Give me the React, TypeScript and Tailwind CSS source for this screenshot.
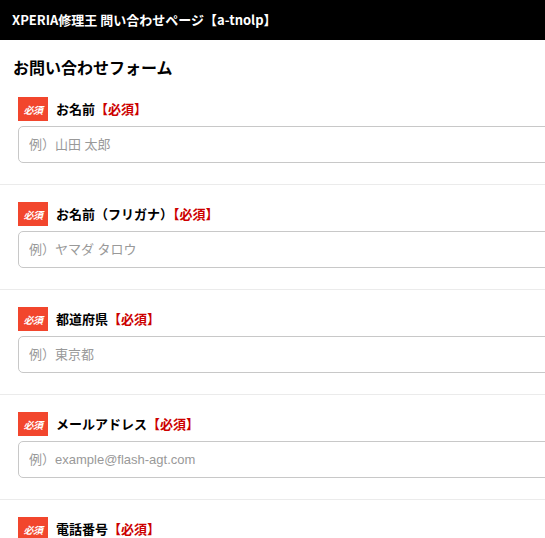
import React from 'react';

interface Field {
  label: string;
  placeholder?: string;
}

const fields: Field[] = [
  { label: 'お名前', placeholder: '例）山田 太郎' },
  { label: 'お名前（フリガナ）', placeholder: '例）ヤマダ タロウ' },
  { label: '都道府県', placeholder: '例）東京都' },
  { label: 'メールアドレス', placeholder: '例）example@flash-agt.com' },
  { label: '電話番号', placeholder: '例）090-1234-5678' },
];

const font = { fontFamily: '"Noto Sans CJK JP", "Noto Sans", sans-serif' };
const inputFont = { fontFamily: '"Liberation Sans", "Noto Sans CJK JP", sans-serif' };

const App: React.FC = () => {
  return (
    <div className="min-h-screen bg-white overflow-hidden text-black" style={font}>
      <header className="h-[40px] bg-black flex items-center pl-3">
        <h1 className="text-[13px] font-bold text-white">XPERIA修理王 問い合わせページ【a-tnolp】</h1>
      </header>

      <h2 className="text-[16px] font-bold pl-[13px] pt-[15px] leading-[24px]">お問い合わせフォーム</h2>

      <form className="pt-[18px]">
        {fields.map((f, i) => (
          <div key={i} className={i === 0 ? 'pb-[21px] border-b border-[#ebebeb]' : 'pt-[17px] pb-[21px] border-b border-[#ebebeb]'}>
            <div className="pl-[18px] flex items-center gap-2 h-[24px]">
              <span className="w-[30px] h-[24px] bg-[#f2462d] text-white text-[10px] font-bold italic flex items-center justify-center tracking-tighter">
                必須
              </span>
              <span className="text-[13px] font-bold">
                {f.label}
                <span className="text-[#cc0000]">【必須】</span>
              </span>
            </div>
            <div className="pl-[18px] mt-[5px]">
              <input
                type="text"
                placeholder={f.placeholder}
                className="w-[620px] h-[37px] border border-[#c8c8c8] rounded-[5px] px-[10px] text-[13px] placeholder:text-[#999] focus:outline-none"
                style={inputFont}
              />
            </div>
          </div>
        ))}
      </form>
    </div>
  );
};

export default App;
